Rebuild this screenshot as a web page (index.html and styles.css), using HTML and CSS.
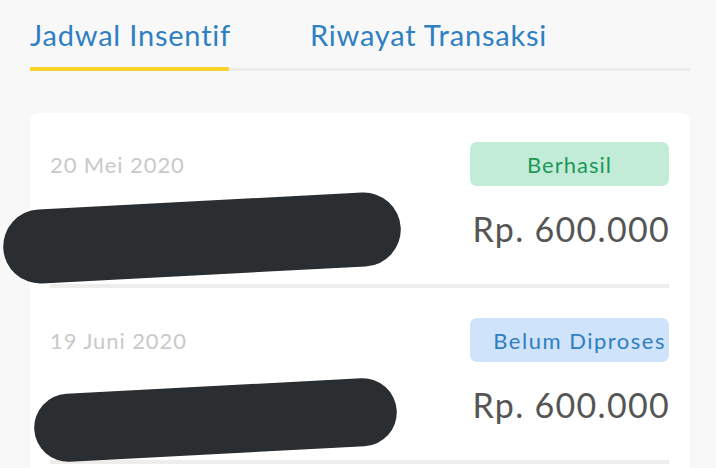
FILE: index.html
```html
<!DOCTYPE html>
<html>
<head>
<meta charset="utf-8">
<link rel="stylesheet" href="styles.css">
</head>
<body>
<div class="page">
  <nav class="tabs">
    <div class="tab active">Jadwal Insentif</div>
    <div class="tab">Riwayat Transaksi</div>
  </nav>
  <section class="card">
    <div class="row">
      <div class="row-inner">
        <div class="line1">
          <span class="date">20 Mei 2020</span>
          <span class="badge success">Berhasil</span>
        </div>
        <div class="line2">
          <span class="amount">Rp. 600.000</span>
        </div>
      </div>
    </div>
    <div class="row second">
      <div class="row-inner">
        <div class="line1">
          <span class="date">19 Juni 2020</span>
          <span class="badge pending">Belum Diproses</span>
        </div>
        <div class="line2">
          <span class="amount">Rp. 600.000</span>
        </div>
      </div>
    </div>
  </section>
  <div class="redact r1"></div>
  <div class="redact r2"></div>
</div>
</body>
</html>
```

FILE: styles.css
```css
* { box-sizing: border-box; }
html, body {
  margin: 0;
  padding: 0;
  background: #f8f8f8;
  font-family: Lato, "Open Sans", sans-serif;
  overflow: hidden;
}
.page {
  position: relative;
  width: 716px;
  height: 468px;
  padding: 0 26px 0 30px;
  overflow: hidden;
}
.tabs {
  display: flex;
  gap: 81px;
  padding-top: 17px;
  border-bottom: 3px solid #ececec;
  height: 71px;
}
.tab {
  font-size: 29px;
  line-height: 36px;
  color: #2f80c2;
  letter-spacing: 0.8px;
  white-space: nowrap;
  height: 50px;
}
.tab.active {
  width: 199px;
  border-bottom: 4px solid #fbd32f;
  margin-bottom: -3px;
  height: 54px;
}
.card {
  margin-top: 42px;
  background: #ffffff;
  border-radius: 8px 8px 0 0;
  padding: 0 21px 0 20px;
  height: 355px;
}
.row {
  padding-top: 29px;
}
.row.second {
  padding-top: 30px;
}
.row-inner {
  border-bottom: 4px solid #efedeb;
  padding-bottom: 36px;
}
.line1 {
  display: flex;
  justify-content: space-between;
  align-items: center;
  height: 44px;
}
.date {
  font-size: 22px;
  color: #c9c9c9;
  letter-spacing: 0.9px;
}
.badge {
  width: 199px;
  height: 44px;
  border-radius: 7px;
  display: flex;
  align-items: center;
  justify-content: center;
  font-size: 22px;
  letter-spacing: 1px;
}
.badge.success {
  background: #c2ecd7;
  color: #1d9757;
}
.badge.pending {
  background: #cfe3fb;
  color: #2f7fc0;
  letter-spacing: 1.5px;
  justify-content: flex-end;
  padding-right: 3px;
  white-space: nowrap;
}
.line2 {
  display: flex;
  justify-content: flex-end;
  margin-top: 22px;
  height: 40px;
  align-items: center;
}
.amount {
  font-size: 34px;
  color: #555555;
  letter-spacing: 1.3px;
  margin-right: -1px;
}
.redact {
  position: absolute;
  background: #2a2e31;
  border-radius: 40px;
}
.redact.r1 {
  left: 3px;
  top: 201px;
  width: 398px;
  height: 74px;
  transform: rotate(-3deg);
}
.redact.r2 {
  left: 34px;
  top: 386px;
  width: 363px;
  height: 68px;
  transform: rotate(-3deg);
}
```
